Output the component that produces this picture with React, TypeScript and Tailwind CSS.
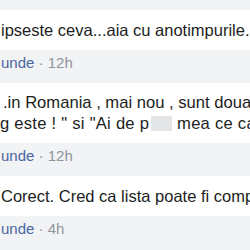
export default function App() {
  return (
    <div className="w-[250px] h-[250px] overflow-hidden bg-[#f2f3f5] font-['Liberation_Sans',Arial,sans-serif]">
      <div className="flex flex-col pt-[10px]">
        {/* Comment 1 */}
        <div className="flex flex-col">
          <div className="w-[300px] bg-white py-[10px] pl-[1px] text-[16.5px] leading-[20px] text-[#1c1e21] whitespace-nowrap overflow-hidden">
            ipseste ceva...aia cu anotimpurile.
          </div>
          <div className="h-[23px] pl-[1px] pt-[4px] text-[15px] leading-[18px] whitespace-nowrap">
            <span className="text-[#4b67a1]">unde</span>
            <span className="text-[#90949c]"> · 12h</span>
          </div>
        </div>

        {/* Comment 2 */}
        <div className="flex flex-col mt-[10px]">
          <div className="w-[300px] bg-white py-[9px] pl-[3px] text-[16.6px] leading-[21px] text-[#1c1e21] whitespace-nowrap overflow-hidden">
            <div>.in Romania , mai nou , sunt doua</div>
            <div className="-ml-[3px] tracking-[0.25px]">
              g este ! " si "Ai de p
              <span className="inline-block w-[21px] h-[15px] ml-[2px] align-[-2px] bg-[#e4e5e7]" />
              {" "}mea ce calda
            </div>
          </div>
          <div className="h-[23px] pl-[1px] pt-[4px] text-[15px] leading-[18px] whitespace-nowrap">
            <span className="text-[#4b67a1]">unde</span>
            <span className="text-[#90949c]"> · 12h</span>
          </div>
        </div>

        {/* Comment 3 */}
        <div className="flex flex-col mt-[10px]">
          <div className="w-[300px] bg-white py-[10px] pl-[1px] text-[16.5px] leading-[20px] text-[#1c1e21] whitespace-nowrap overflow-hidden">
            Corect. Cred ca lista poate fi completata
          </div>
          <div className="h-[23px] pl-[1px] pt-[4px] text-[15px] leading-[18px] whitespace-nowrap">
            <span className="text-[#4b67a1]">unde</span>
            <span className="text-[#90949c]"> · 4h</span>
          </div>
        </div>
      </div>
    </div>
  );
}
